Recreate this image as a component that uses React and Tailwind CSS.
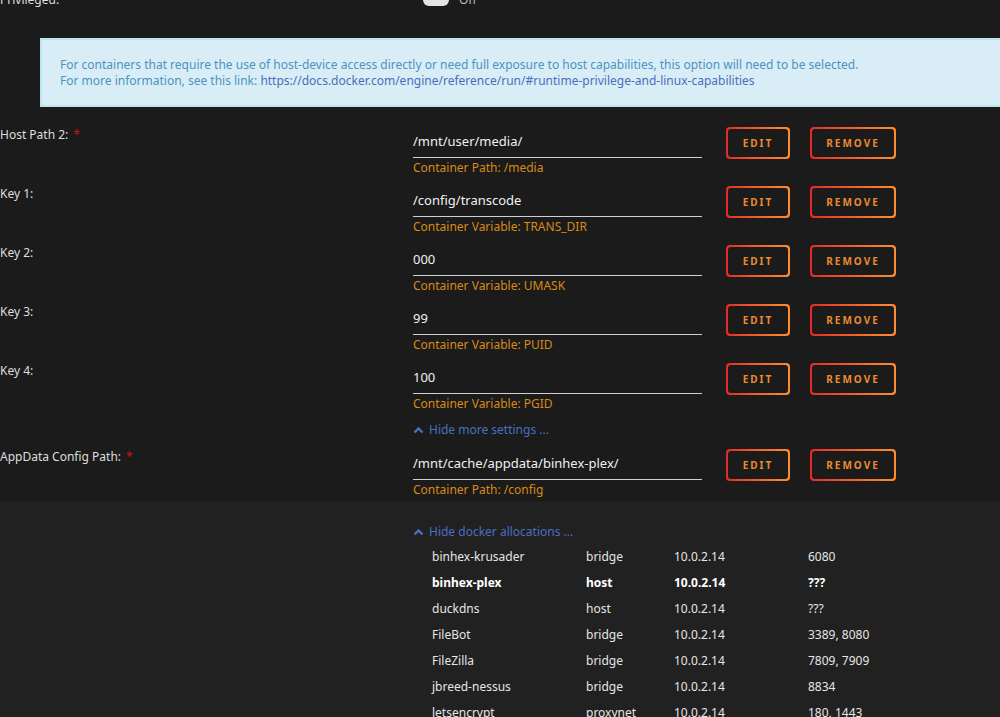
import React from 'react';

const font = { fontFamily: '"Noto Sans", "Open Sans", sans-serif' };

const mappings = [
  { label: 'Host Path 2:', required: true, value: '/mnt/user/media/', hint: 'Container Path: /media' },
  { label: 'Key 1:', value: '/config/transcode', hint: 'Container Variable: TRANS_DIR' },
  { label: 'Key 2:', value: '000', hint: 'Container Variable: UMASK' },
  { label: 'Key 3:', value: '99', hint: 'Container Variable: PUID' },
  { label: 'Key 4:', value: '100', hint: 'Container Variable: PGID' },
];

const allocations = [
  ['binhex-krusader', 'bridge', '10.0.2.14', '6080'],
  ['binhex-plex', 'host', '10.0.2.14', '???', true],
  ['duckdns', 'host', '10.0.2.14', '???'],
  ['FileBot', 'bridge', '10.0.2.14', '3389, 8080'],
  ['FileZilla', 'bridge', '10.0.2.14', '7809, 7909'],
  ['jbreed-nessus', 'bridge', '10.0.2.14', '8834'],
  ['letsencrypt', 'proxynet', '10.0.2.14', '180, 1443'],
];

function GradientButton({ children, width }) {
  return (
    <div className={`h-[32px] self-start rounded-[4px] bg-gradient-to-r from-[#e22828] to-[#ff8c2f] p-[2px] ${width}`}>
      <div className="flex h-[28px] items-center justify-center rounded-[3px] bg-[#1b1b1b]">
        <span className="text-[10px] font-bold tracking-[2px] text-[#ec8a30]">{children}</span>
      </div>
    </div>
  );
}

function Chevron() {
  return (
    <svg width="11" height="8" viewBox="0 0 11 8" className="mr-[5px]">
      <polyline points="1.5,6.5 5.5,2.5 9.5,6.5" fill="none" stroke="#4a6fc0" strokeWidth="2.4" />
    </svg>
  );
}

function MappingRow({ label, required, value, hint }) {
  return (
    <div className="flex h-[59px] items-start">
      <div className="w-[413px] text-[12px] leading-[16px] text-[#dedede]">
        {label}
        {required && <span className="ml-[5px] text-[#c81414]">*</span>}
      </div>
      <div className="w-[289px]">
        <div className="flex h-[31px] items-center border-b border-[#d0d0d0] text-[13px] text-[#f0f0f0]">{value}</div>
        <div className="text-[12px] leading-[20px] text-[#d88a16]">{hint}</div>
      </div>
      <div className="ml-[24px] flex items-start gap-[20px]">
        <GradientButton width="w-[64px]">EDIT</GradientButton>
        <GradientButton width="w-[86px]">REMOVE</GradientButton>
      </div>
    </div>
  );
}

export default function App() {
  return (
    <div className="h-[717px] w-[1000px] overflow-hidden bg-[#1b1b1b]" style={font}>
      <div className="-mt-[10px] flex h-[20px] items-center text-[12px] text-[#dedede]">
        <div className="w-[423px]">Privileged:</div>
        <div className="h-[12px] w-[26px] rounded-full bg-[#e4e4e4]" />
        <div className="ml-[10px] text-[#bdbdbd]">Off</div>
      </div>

      <div className="ml-[40px] mt-[28px] w-[1000px] border-2 border-[#bfe3ef] bg-[#d9edf7] pb-[16px] pl-[18px] pt-[17px] text-[12px] leading-[16px] text-[#4b94c0]">
        <div>For containers that require the use of host-device access directly or need full exposure to host capabilities, this option will need to be selected.</div>
        <div>
          For more information, see this link:{' '}
          <span className="text-[#4a6fba]">https://docs.docker.com/engine/reference/run/#runtime-privilege-and-linux-capabilities</span>
        </div>
      </div>

      <div className="mt-[20px]">
        {mappings.map((m) => (
          <MappingRow key={m.label} {...m} />
        ))}
      </div>

      <div className="ml-[413px] flex h-[16px] items-center text-[12px] text-[#4a6fc0]">
        <Chevron />
        Hide more settings ...
      </div>

      <div className="mt-[11px] h-[53px] overflow-hidden">
        <MappingRow label="AppData Config Path:" required value="/mnt/cache/appdata/binhex-plex/" hint="Container Path: /config" />
      </div>

      <div className="h-[220px] bg-[#212121] pt-[22px]">
        <div className="ml-[413px] flex h-[16px] items-center text-[12px] text-[#4a6fc0]">
          <Chevron />
          Hide docker allocations ...
        </div>
        <div className="ml-[432px] mt-[4px] text-[12px] text-[#e6e6e6]">
          {allocations.map(([name, net, ip, ports, bold]) => (
            <div key={name} className={`grid h-[26px] grid-cols-[154px_88px_134px_1fr] items-center ${bold ? 'font-bold text-white' : ''}`}>
              <div>{name}</div>
              <div>{net}</div>
              <div>{ip}</div>
              <div>{ports}</div>
            </div>
          ))}
        </div>
      </div>
    </div>
  );
}
